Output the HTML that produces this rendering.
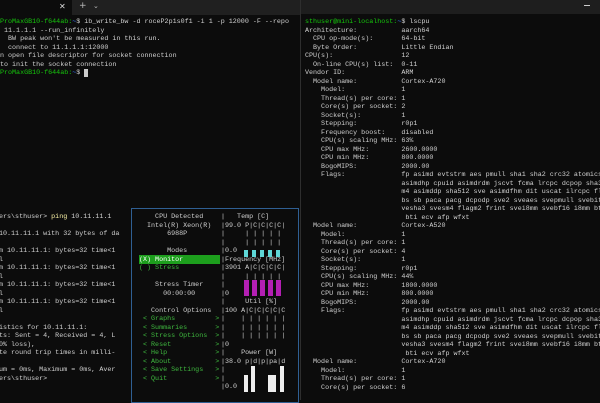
<!DOCTYPE html>
<html><head><meta charset="utf-8"><style>
*{margin:0;padding:0;box-sizing:border-box}
body{width:600px;height:400px;background:#0c0c0c;overflow:hidden;position:relative;font-family:"Liberation Mono",monospace;font-size:6.7px;color:#d0d0d0}
pre{position:absolute;font-family:"Liberation Mono",monospace;font-size:6.7px;line-height:8.5px;white-space:pre;margin:0}
.g{color:#16c60c}.y{color:#f9f1a5}.b{color:#3b78ff}
.tg{color:#3fb93f}
.abs{position:absolute}
</style></head><body>
<div class="abs" style="left:0;top:0;width:300px;height:15px;background:#202020"></div>
<div class="abs" style="left:0;top:0;width:72px;height:15px;background:#0c0c0c"></div>
<div class="abs" style="left:59px;top:2px;color:#ddd;font-size:8px;font-family:'DejaVu Sans',sans-serif">✕</div>
<div class="abs" style="left:79px;top:1px;color:#bbb;font-size:9px;font-family:'DejaVu Sans',sans-serif">+</div>
<div class="abs" style="left:93px;top:2px;color:#bbb;font-size:7px;font-family:'DejaVu Sans',sans-serif">⌄</div>
<div class="abs" style="left:300px;top:0;width:300px;height:14px;background:#1e1e1e"></div>
<div class="abs" style="left:584px;top:5px;width:6px;height:1px;background:#ccc"></div>
<div class="abs" style="left:300px;top:0;width:1px;height:400px;background:#2e2e2e"></div>

<pre style="left:0;top:18px"><span class="g">ProMaxGB10-f644ab:</span><span class="b">~</span>$ ib_write_bw -d roceP2p1s0f1 -i 1 -p 12000 -F --repo
 11.1.1.1 --run_infinitely
  BW peak won't be measured in this run.
  connect to 11.1.1.1:12000
n open file descriptor for socket connection
to init the socket connection
<span class="g">ProMaxGB10-f644ab:</span><span class="b">~</span>$ <span style="background:#ccc"> </span></pre>

<pre style="left:305px;top:18px"><span class="g">sthuser@mini-localhost:</span><span class="b">~</span>$ lscpu
Architecture:           aarch64
  CPU op-mode(s):       64-bit
  Byte Order:           Little Endian
CPU(s):                 12
  On-line CPU(s) list:  0-11
Vendor ID:              ARM
  Model name:           Cortex-A720
    Model:              1
    Thread(s) per core: 1
    Core(s) per socket: 2
    Socket(s):          1
    Stepping:           r0p1
    Frequency boost:    disabled
    CPU(s) scaling MHz: 63%
    CPU max MHz:        2600.0000
    CPU min MHz:        800.0000
    BogoMIPS:           2000.00
    Flags:              fp asimd evtstrm aes pmull sha1 sha2 crc32 atomics
                        asimdhp cpuid asimdrdm jscvt fcma lrcpc dcpop sha3
                        m4 asimddp sha512 sve asimdfhm dit uscat ilrcpc fl
                        bs sb paca pacg dcpodp sve2 sveaes svepmull svebit
                        vesha3 svesm4 flagm2 frint svei8mm svebf16 i8mm bf
                         bti ecv afp wfxt
  Model name:           Cortex-A520
    Model:              1
    Thread(s) per core: 1
    Core(s) per socket: 4
    Socket(s):          1
    Stepping:           r0p1
    CPU(s) scaling MHz: 44%
    CPU max MHz:        1800.0000
    CPU min MHz:        800.0000
    BogoMIPS:           2000.00
    Flags:              fp asimd evtstrm aes pmull sha1 sha2 crc32 atomics
                        asimdhp cpuid asimdrdm jscvt fcma lrcpc dcpop sha3
                        m4 asimddp sha512 sve asimdfhm dit uscat ilrcpc fl
                        bs sb paca pacg dcpodp sve2 sveaes svepmull svebit
                        vesha3 svesm4 flagm2 frint svei8mm svebf16 i8mm bf
                         bti ecv afp wfxt
  Model name:           Cortex-A720
    Model:              1
    Thread(s) per core: 1
    Core(s) per socket: 6</pre>

<pre style="left:-1px;top:213px">ers\sthuser&gt; <span class="y">ping</span> 10.11.11.1

10.11.11.1 with 32 bytes of da

m 10.11.11.1: bytes=32 time&lt;1
l
m 10.11.11.1: bytes=32 time&lt;1
l
m 10.11.11.1: bytes=32 time&lt;1
l
m 10.11.11.1: bytes=32 time&lt;1
l

istics for 10.11.11.1:
ts: Sent = 4, Received = 4, L
0% loss),
te round trip times in milli-

um = 0ms, Maximum = 0ms, Aver
ers\sthuser&gt;</pre>

<div class="abs" style="left:131px;top:208px;width:168px;height:195px;border:1px solid #2f5f93"></div>
<div class="abs" style="left:139px;top:255px;width:81px;height:9px;background:#1d9f1d"></div>
<pre style="left:139px;top:213px">    CPU Detected
  Intel(R) Xeon(R)
       6988P

       Modes
<span style="color:#fff">(X) Monitor</span>
<span class="tg">( ) Stress</span>

    Stress Timer
      00:00:00

   Control Options
<span class="tg"> &lt; Graphs          &gt;
 &lt; Summaries       &gt;
 &lt; Stress Options  &gt;
 &lt; Reset           &gt;
 &lt; Help            &gt;
 &lt; About           &gt;
 &lt; Save Settings   &gt;
 &lt; Quit            &gt;</span></pre>
<pre style="left:221px;top:213px">|   Temp [C]
|99.0 P|C|C|C|C|
|     | | | | |
|     | | | | |
|0.0
|Frequency [MHz]
|3901 A|C|C|C|C|
|     | | | | |
|
|0
|     Util [%]
|100 A|C|C|C|C|C
|    | | | | | |
|    | | | | | |
|    | | | | | |
|0
|    Power [W]
|38.0 p|d|p|pa|d
|
|
|0.0</pre>
<div class="abs" style="left:244px;top:250px;width:4px;height:7px;background:#5fd7d7"></div>
<div class="abs" style="left:252px;top:250px;width:4px;height:7px;background:#5fd7d7"></div>
<div class="abs" style="left:260px;top:250px;width:4px;height:7px;background:#5fd7d7"></div>
<div class="abs" style="left:268px;top:250px;width:4px;height:7px;background:#5fd7d7"></div>
<div class="abs" style="left:276px;top:250px;width:4px;height:7px;background:#5fd7d7"></div>
<div class="abs" style="left:244px;top:280px;width:5px;height:16px;background:#b31fb3"></div>
<div class="abs" style="left:252px;top:280px;width:5px;height:16px;background:#b31fb3"></div>
<div class="abs" style="left:260px;top:280px;width:5px;height:16px;background:#b31fb3"></div>
<div class="abs" style="left:268px;top:280px;width:5px;height:16px;background:#b31fb3"></div>
<div class="abs" style="left:276px;top:280px;width:5px;height:16px;background:#b31fb3"></div>
<div class="abs" style="left:244px;top:375px;width:4px;height:17px;background:#eee"></div>
<div class="abs" style="left:251px;top:366px;width:4px;height:26px;background:#eee"></div>
<div class="abs" style="left:268px;top:375px;width:8px;height:17px;background:#eee"></div>
<div class="abs" style="left:280px;top:366px;width:4px;height:26px;background:#eee"></div>
</body></html>
